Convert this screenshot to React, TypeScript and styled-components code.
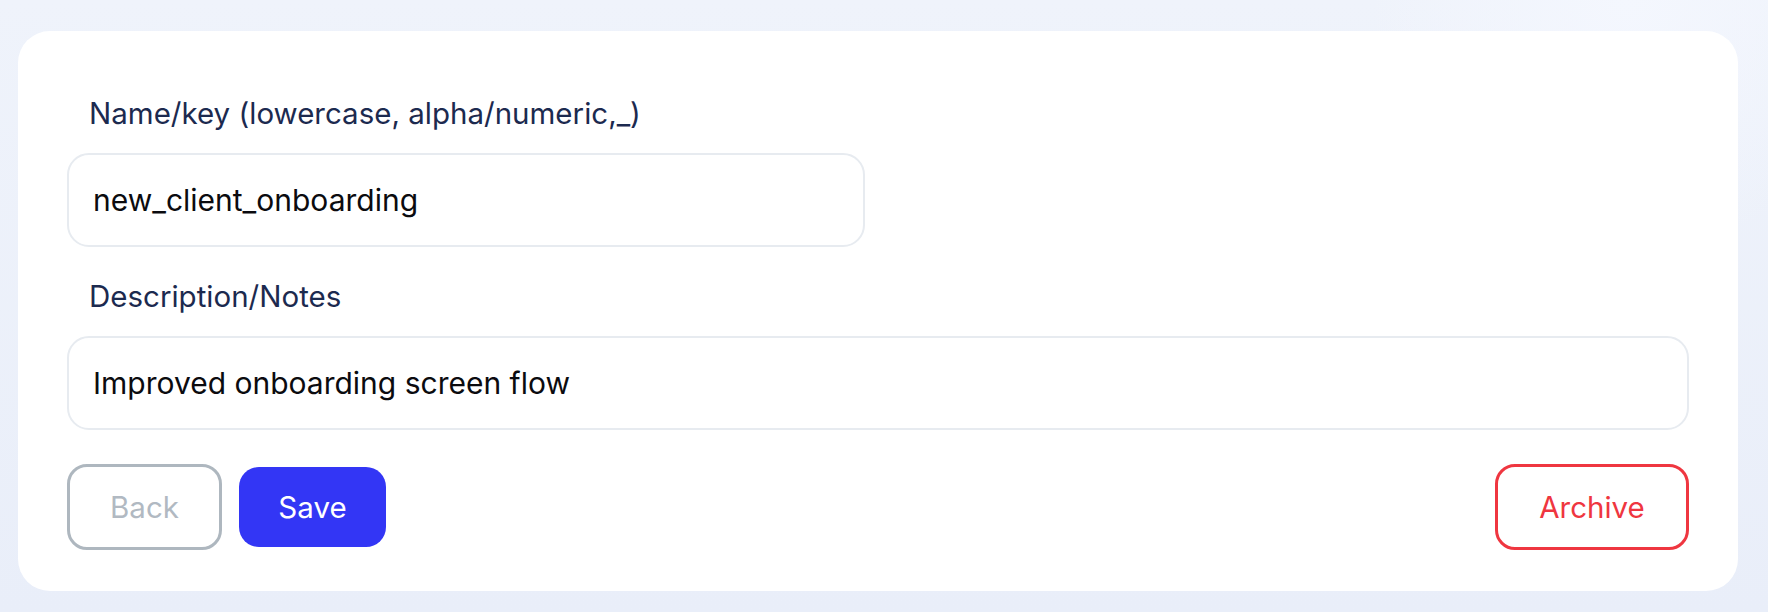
import React from "react";
import styled, { createGlobalStyle } from "styled-components";

const GlobalStyle = createGlobalStyle`
    html, body {
        margin: 0;
        padding: 0;
    }
    body {
        min-height: 612px;
        background: radial-gradient(circle at 92% 0%, #f4f7fe 0, rgba(244, 247, 254, 0) 260px),
            linear-gradient(180deg, #eff3fb 0%, #e9eef9 100%);
        font-family: Inter, "Noto Sans", "Liberation Sans", sans-serif;
    }
`;

const Page = styled.div`
    padding: 31px 30px 21px 18px;
`;

const Card = styled.div`
    box-sizing: border-box;
    height: 560px;
    background: #ffffff;
    border-radius: 32px;
    padding: 64px 49px 0;
    display: flex;
    flex-direction: column;
`;

const Field = styled.div`
    display: flex;
    flex-direction: column;
    gap: 22px;
    margin-bottom: 31px;
`;

const Label = styled.label`
    margin-left: 22px;
    font-size: 29.5px;
    line-height: 36px;
    color: #1c2a4f;
`;

const Input = styled.input<{ $width?: number }>`
    box-sizing: border-box;
    width: ${({ $width }) => ($width ? `${$width}px` : "100%")};
    height: 94px;
    border: 2px solid #e7ebf0;
    border-radius: 22px;
    padding: 0 24px;
    font-family: inherit;
    font-size: 30px;
    color: #0b0b0f;
    background: #ffffff;
    outline: none;
`;

const ButtonRow = styled.div`
    display: flex;
    align-items: center;
    gap: 17px;
    margin-top: 3px;
`;

const Spacer = styled.div`
    flex: 1;
`;

const Button = styled.button<{ $variant: "ghost" | "primary" | "danger"; $width: number }>`
    box-sizing: border-box;
    width: ${({ $width }) => $width}px;
    height: ${({ $variant }) => ($variant === "primary" ? 80 : 86)}px;
    border-radius: 20px;
    font-family: inherit;
    font-size: 29.5px;
    cursor: pointer;
    border: ${({ $variant }) =>
        $variant === "ghost" ? "3.5px solid #aeb7bf" : $variant === "danger" ? "3.5px solid #ef3640" : "none"};
    background: ${({ $variant }) => ($variant === "primary" ? "#3336f5" : "#ffffff")};
    color: ${({ $variant }) =>
        $variant === "ghost" ? "#b1b9c2" : $variant === "danger" ? "#ef3640" : "#ffffff"};
`;

export default function App() {
    return (
        <Page>
            <GlobalStyle />
            <Card>
                <Field>
                    <Label>Name/key (lowercase, alpha/numeric,_)</Label>
                    <Input $width={798} defaultValue="new_client_onboarding" />
                </Field>
                <Field>
                    <Label>Description/Notes</Label>
                    <Input defaultValue="Improved onboarding screen flow" />
                </Field>
                <ButtonRow>
                    <Button $variant="ghost" $width={155}>Back</Button>
                    <Button $variant="primary" $width={147}>Save</Button>
                    <Spacer />
                    <Button $variant="danger" $width={194}>Archive</Button>
                </ButtonRow>
            </Card>
        </Page>
    );
}
